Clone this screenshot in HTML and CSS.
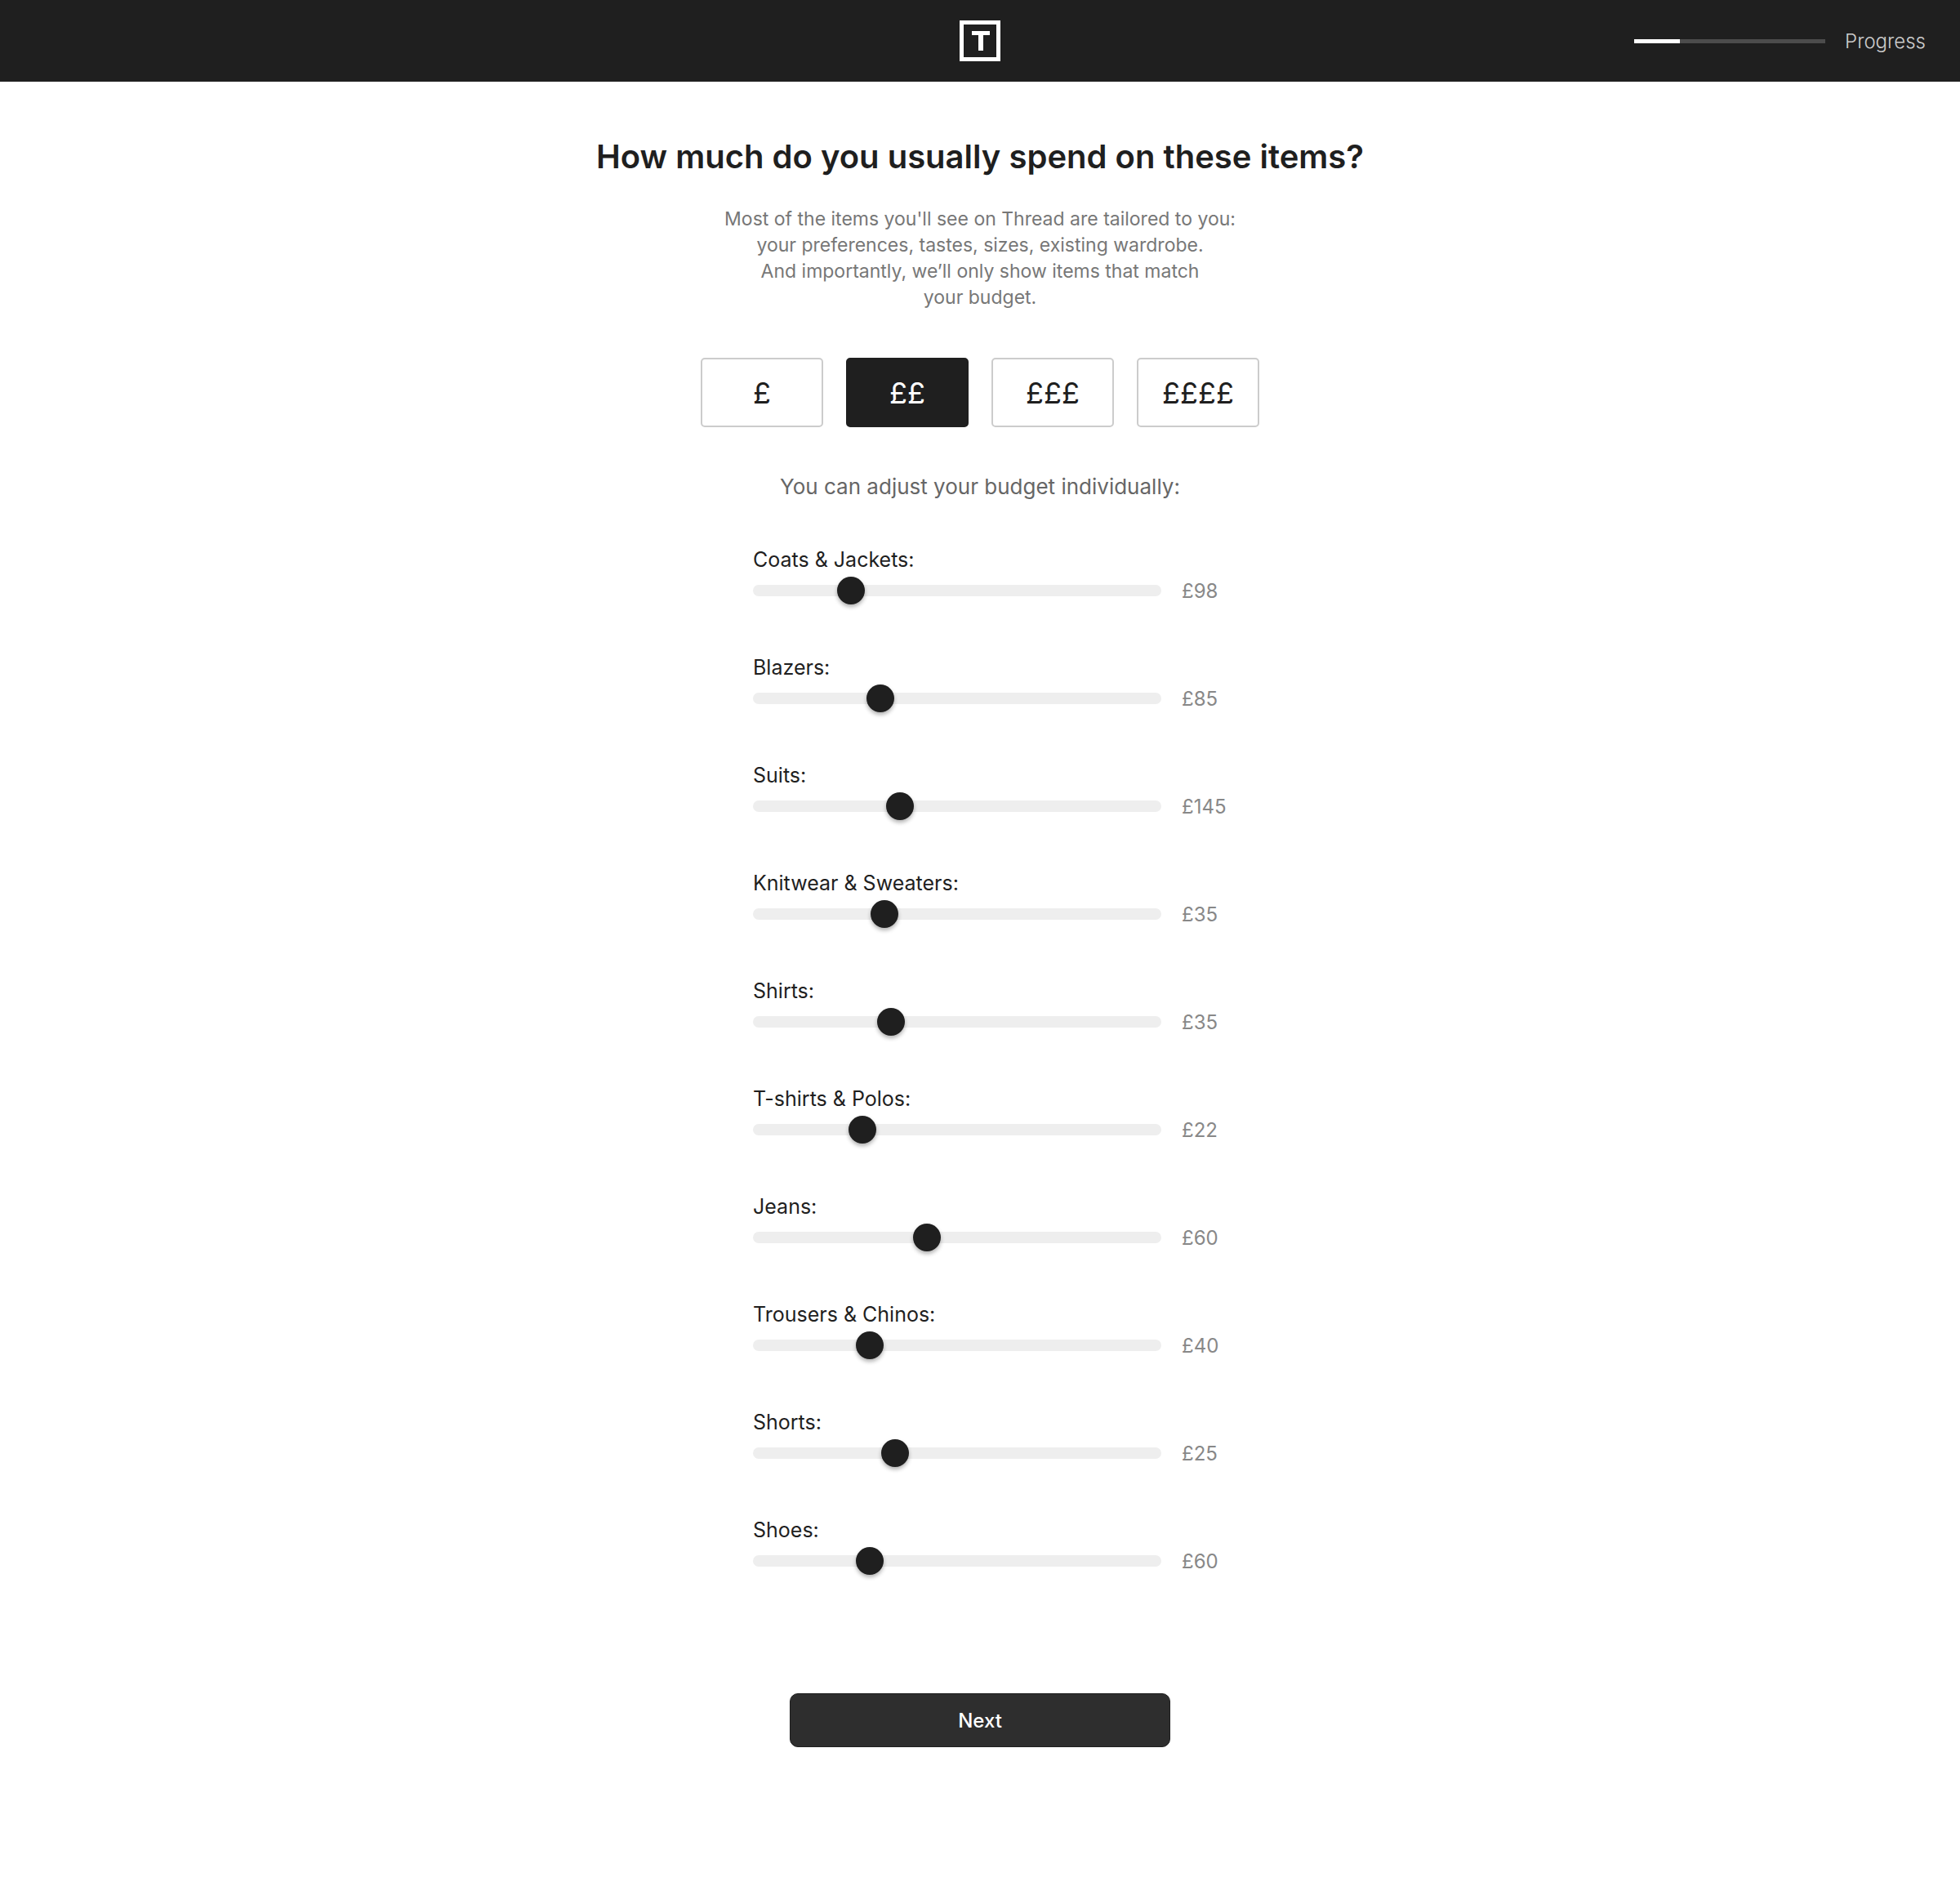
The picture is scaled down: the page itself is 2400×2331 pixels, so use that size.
FILE: index.html
```html
<!DOCTYPE html>
<html lang="en">
<head>
    <meta charset="UTF-8">
    <meta name="viewport" content="width=device-width, initial-scale=1.0">
    <title>Thread - Your budget</title>
    <link rel="stylesheet" href="styles.css">
</head>
<body>
<header class="header">
    <a href="#" class="logo" aria-label="Thread">
        <svg width="50" height="50" viewBox="0 0 50 50" aria-hidden="true">
            <rect x="2.5" y="2.5" width="45" height="45" fill="none" stroke="#ffffff" stroke-width="5"/>
            <rect x="15" y="13" width="22" height="5" fill="#ffffff"/>
            <rect x="23" y="13" width="6" height="24" fill="#ffffff"/>
        </svg>
    </a>
    <div class="progress">
        <div class="progress-bar"><div class="progress-fill"></div></div>
        <span class="progress-label">Progress</span>
    </div>
</header>
<main class="content">
    <h1>How much do you usually spend on these items?</h1>
    <p class="intro">
        Most of the items you'll see on Thread are tailored to you:<br>
        your preferences, tastes, sizes, existing wardrobe.<br>
        And importantly, we’ll only show items that match<br>
        your budget.
    </p>
    <form id="budgetForm">
        <div class="presets">
            <button type="button" class="preset">£</button>
            <button type="button" class="preset selected">££</button>
            <button type="button" class="preset">£££</button>
            <button type="button" class="preset">££££</button>
        </div>
        <p class="adjust">You can adjust your budget individually:</p>
        <div class="sliders">
            <div class="slider">
                <label for="coats">Coats &amp; Jackets:</label>
                <div class="slider-row">
                    <input type="range" id="coats" name="coats" min="0" max="445" value="98">
                    <output for="coats">£98</output>
                </div>
            </div>
            <div class="slider">
                <label for="blazers">Blazers:</label>
                <div class="slider-row">
                    <input type="range" id="blazers" name="blazers" min="0" max="284" value="85">
                    <output for="blazers">£85</output>
                </div>
            </div>
            <div class="slider">
                <label for="suits">Suits:</label>
                <div class="slider-row">
                    <input type="range" id="suits" name="suits" min="0" max="414" value="145">
                    <output for="suits">£145</output>
                </div>
            </div>
            <div class="slider">
                <label for="knitwear">Knitwear &amp; Sweaters:</label>
                <div class="slider-row">
                    <input type="range" id="knitwear" name="knitwear" min="0" max="113" value="35">
                    <output for="knitwear">£35</output>
                </div>
            </div>
            <div class="slider">
                <label for="shirts">Shirts:</label>
                <div class="slider-row">
                    <input type="range" id="shirts" name="shirts" min="0" max="107" value="35">
                    <output for="shirts">£35</output>
                </div>
            </div>
            <div class="slider">
                <label for="tshirts">T-shirts &amp; Polos:</label>
                <div class="slider-row">
                    <input type="range" id="tshirts" name="tshirts" min="0" max="88" value="22">
                    <output for="tshirts">£22</output>
                </div>
            </div>
            <div class="slider">
                <label for="jeans">Jeans:</label>
                <div class="slider-row">
                    <input type="range" id="jeans" name="jeans" min="0" max="143" value="60">
                    <output for="jeans">£60</output>
                </div>
            </div>
            <div class="slider">
                <label for="trousers">Trousers &amp; Chinos:</label>
                <div class="slider-row">
                    <input type="range" id="trousers" name="trousers" min="0" max="148" value="40">
                    <output for="trousers">£40</output>
                </div>
            </div>
            <div class="slider">
                <label for="shorts">Shorts:</label>
                <div class="slider-row">
                    <input type="range" id="shorts" name="shorts" min="0" max="74" value="25">
                    <output for="shorts">£25</output>
                </div>
            </div>
            <div class="slider">
                <label for="shoes">Shoes:</label>
                <div class="slider-row">
                    <input type="range" id="shoes" name="shoes" min="0" max="222" value="60">
                    <output for="shoes">£60</output>
                </div>
            </div>
        </div>
        <button type="submit" class="next">Next</button>
    </form>
</main>
<script>
    // Show the amount next to its slider
    document.querySelectorAll('.slider input').forEach(function(input) {
        input.addEventListener('input', function() {
            input.nextElementSibling.textContent = '£' + input.value;
        });
    });

    document.querySelectorAll('.preset').forEach(function(preset) {
        preset.addEventListener('click', function() {
            document.querySelector('.preset.selected').classList.remove('selected');
            preset.classList.add('selected');
        });
    });
</script>
</body>
</html>
```
FILE: styles.css
```css
* {
    box-sizing: border-box;
}
body {
    margin: 0;
    font-family: Inter, Roboto, sans-serif;
    font-size: 24px;
    color: #1f1f1f;
    background-color: #ffffff;
}
.header {
    display: grid;
    grid-template-columns: 1fr auto 1fr;
    align-items: center;
    height: 100px;
    padding: 0 42px;
    background-color: #1f1f1f;
}
.logo {
    display: block;
    grid-column: 2;
    height: 50px;
}
.progress {
    display: flex;
    align-items: center;
    justify-content: flex-end;
    gap: 24px;
}
.progress-bar {
    width: 234px;
    height: 5px;
    background-color: #4c4c4c;
}
.progress-fill {
    width: 24%;
    height: 100%;
    background-color: #ffffff;
}
.progress-label {
    font-weight: 300;
    color: #cccccc;
}
.content {
    display: flex;
    flex-direction: column;
    align-items: center;
    padding: 66px 20px 120px;
    text-align: center;
}
h1 {
    margin: 0;
    font-size: 40px;
    font-weight: 600;
    line-height: 52px;
}
.intro {
    margin: 34px 0 0;
    font-size: 23px;
    line-height: 32px;
    color: #777777;
}
form {
    display: flex;
    flex-direction: column;
    align-items: center;
}
.presets {
    display: flex;
    gap: 28px;
    margin-top: 58px;
}
.preset {
    width: 150px;
    height: 85px;
    padding: 0;
    border: 2px solid #cccccc;
    border-radius: 5px;
    background-color: #ffffff;
    color: #1f1f1f;
    font-family: inherit;
    font-size: 36px;
    cursor: pointer;
}
.preset.selected {
    border-color: #1f1f1f;
    background-color: #1f1f1f;
    color: #ffffff;
}
.adjust {
    margin: 57px 0 0;
    font-size: 26px;
    line-height: 32px;
    color: #666666;
}
.sliders {
    display: grid;
    gap: 56px;
    margin-top: 57px;
    text-align: left;
}
.slider label {
    display: block;
    font-size: 25px;
    line-height: 32px;
}
.slider-row {
    display: flex;
    align-items: center;
    gap: 25px;
    height: 44px;
}
.slider input {
    -webkit-appearance: none;
    appearance: none;
    width: 500px;
    height: 14px;
    margin: 0;
    border-radius: 7px;
    background-color: #eeeeee;
    cursor: pointer;
}
.slider input::-webkit-slider-thumb {
    -webkit-appearance: none;
    width: 34px;
    height: 34px;
    border-radius: 50%;
    background-color: #1f1f1f;
    box-shadow: 0 3px 5px rgba(0, 0, 0, 0.3);
}
/* Longer amounts run past the column so the sliders stay put */
.slider output {
    width: 31px;
    white-space: nowrap;
    color: #888888;
}
.next {
    width: 466px;
    height: 66px;
    margin-top: 140px;
    border: 1px solid #1f1f1f;
    border-radius: 10px;
    background-color: #2e2e2e;
    color: #ffffff;
    font-family: inherit;
    font-size: 24px;
    font-weight: 500;
    cursor: pointer;
}
@media (max-width: 768px) {
    .presets {
        gap: 12px;
    }
    .preset {
        width: 80px;
        height: 60px;
        font-size: 24px;
    }
    .slider input,
    .next {
        width: 260px;
    }
    .progress-bar {
        width: 60px;
    }
}
```
